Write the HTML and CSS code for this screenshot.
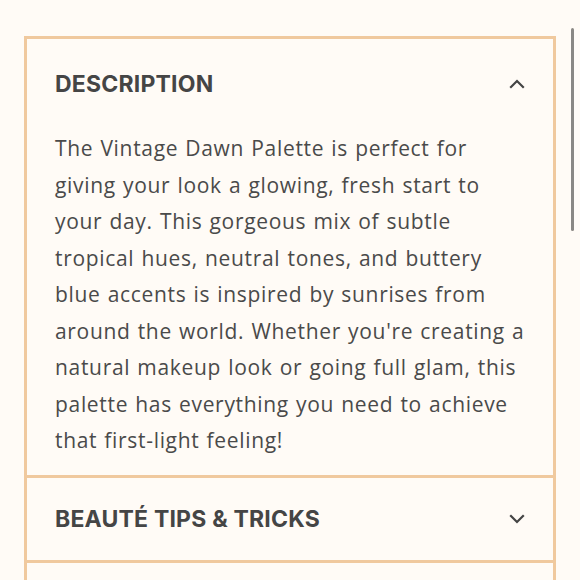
FILE: index.html
```html
<!DOCTYPE html>
<html>
<head>
<meta charset="utf-8">
<link rel="stylesheet" href="styles.css">
</head>
<body>
<div class="page">
  <div class="accordion">
    <section class="item open">
      <div class="head">
        <h2 class="title">DESCRIPTION</h2>
        <svg class="chev" width="16" height="10" viewBox="0 0 16 10"><path d="M2 8 L8 2 L14 8" fill="none" stroke="#444" stroke-width="2.2" stroke-linecap="square"/></svg>
      </div>
      <p class="body">The Vintage Dawn Palette is perfect for giving your look a glowing, fresh start to your day. This gorgeous mix of subtle tropical hues, neutral tones, and buttery blue accents is inspired by sunrises from around the world. Whether you're creating a natural makeup look or going full glam, this palette has everything you need to achieve that first-light feeling!</p>
    </section>
    <section class="item">
      <div class="head">
        <h2 class="title">BEAUTÉ TIPS &amp; TRICKS</h2>
        <svg class="chev" width="16" height="10" viewBox="0 0 16 10"><path d="M2 2 L8 8 L14 2" fill="none" stroke="#444" stroke-width="2.2" stroke-linecap="square"/></svg>
      </div>
    </section>
    <section class="item empty"></section>
  </div>
</div>
<div class="scrollthumb"></div>
</body>
</html>
```
FILE: styles.css
```css
html, body {
  margin: 0;
  padding: 0;
  background: #fffbf6;
  overflow: hidden;
}
.page {
  padding: 36px 24px 0 24px;
  width: 532px;
}
.accordion {
  border: 3px solid #f0c99e;
  border-bottom: none;
  background: #fffbf6;
}
.item {
  border-bottom: 3px solid #f0c99e;
}
.item.empty {
  height: 60px;
  border-bottom: none;
}
.head {
  display: flex;
  align-items: center;
  justify-content: space-between;
  height: 82px;
  padding: 0 28px 0 28px;
}
.item.open .head {
  height: 89px;
}
.title {
  margin: 0;
  font-family: "Inter", "DejaVu Sans", sans-serif;
  font-weight: 700;
  font-size: 23px;
  letter-spacing: 0.2px;
  color: #454545;
}
.chev {
  display: block;
}
.body {
  margin: 0;
  padding: 2px 28px 16px 28px;
  font-family: "Open Sans", "DejaVu Sans", sans-serif;
  font-size: 21px;
  line-height: 36.5px;
  color: #4a4a4a;
  letter-spacing: 0.68px;
  word-spacing: 1px;
}
.scrollthumb {
  position: fixed;
  right: 6px;
  top: 28px;
  width: 3px;
  height: 203px;
  border-radius: 2px;
  background: #8a8884;
}
```
